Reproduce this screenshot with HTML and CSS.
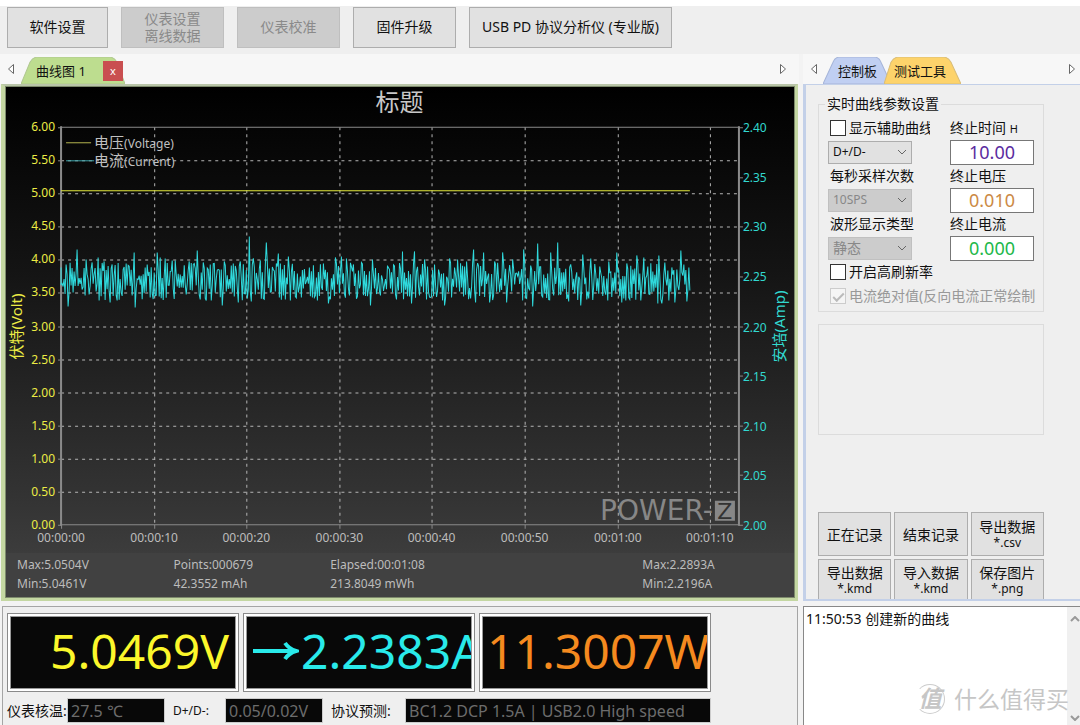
FILE: index.html
```html
<!DOCTYPE html>
<html lang="zh-CN">
<head>
<meta charset="utf-8">
<title>POWER-Z</title>
<link rel="stylesheet" href="styles.css">
</head>
<body>
<header class="toolbar">
  <button class="tool-btn first">软件设置</button>
  <button class="tool-btn" disabled>仪表设置<br>离线数据</button>
  <button class="tool-btn" disabled>仪表校准</button>
  <button class="tool-btn">固件升级</button>
  <button class="tool-btn wide">USB PD 协议分析仪 (专业版)</button>
</header>
<main class="workspace">
  <section class="left">
    <nav class="tabs">
      <button class="arrow" aria-label="向左"><svg width="8" height="12" viewBox="0 0 8 12"><path d="M6.500 1.500V10.500L1.500 6Z"/></svg></button>
      <button class="tab green"><svg class="shape" viewBox="0 0 104 26" preserveAspectRatio="none"><path d="M0 26L9 5Q12 0 17 0H88Q93 0 96 5L104 26Z"/></svg><span>曲线图 1</span></button>
      <button class="close" aria-label="关闭">x</button>
      <button class="arrow end" aria-label="向右"><svg width="8" height="12" viewBox="0 0 8 12"><path d="M1.500 1.500V10.500L6.500 6Z"/></svg></button>
    </nav>
    <div class="chart-frame">
      <svg class="chart" id="chart" viewBox="6 87 789 466">
        <text class="title" x="400" y="112">标题</text>
        <g id="grid"></g>
        <rect class="frame" x="62" y="128" width="677" height="397"/>
        <path class="axis" d="M62 127V526M739 127V526"/>
        <path class="volt-line" d="M62 191.500H690"/>
        <polyline class="amp-line" id="amps"/>
        <path class="volt-key" d="M67 143.500H92"/>
        <path class="amp-key" d="M67 161.500H95"/>
        <text class="key" x="95" y="149">电压<tspan class="small">(Voltage)</tspan></text>
        <text class="key" x="95" y="167">电流<tspan class="small">(Current)</tspan></text>
        <text class="volt-name" transform="translate(23 327) rotate(-90)">伏特(Volt)</text>
        <text class="amp-name" transform="translate(785 327) rotate(-90)">安培(Amp)</text>
        <g class="brand"><text x="713" y="520" text-anchor="end">POWER-</text><rect x="715" y="501" width="20" height="20"/><text class="z" x="725" y="519" text-anchor="middle">Z</text></g>
      </svg>
      <div class="stats">
        <span>Max:5.0504V</span><span>Points:000679</span><span>Elapsed:00:01:08</span><span>Max:2.2893A</span>
        <span>Min:5.0461V</span><span>42.3552 mAh</span><span>213.8049 mWh</span><span>Min:2.2196A</span>
      </div>
    </div>
  </section>
  <aside class="right">
    <nav class="tabs">
      <button class="arrow" aria-label="向左"><svg width="8" height="12" viewBox="0 0 8 12"><path d="M6.500 1.500V10.500L1.500 6Z"/></svg></button>
      <button class="tab blue"><svg class="shape" viewBox="0 0 68 26" preserveAspectRatio="none"><path d="M0 26L10 5Q12 0 17 0H51Q56 0 58 5L68 26Z"/></svg><span>控制板</span></button>
      <button class="tab gold"><svg class="shape" viewBox="0 0 77 26" preserveAspectRatio="none"><path d="M0 26L7 5Q10 0 15 0H59Q64 0 67 5L77 26Z"/></svg><span>测试工具</span></button>
      <button class="arrow end" aria-label="向右"><svg width="8" height="12" viewBox="0 0 8 12"><path d="M1.500 1.500V10.500L6.500 6Z"/></svg></button>
    </nav>
    <div class="panel">
      <fieldset class="group">
        <legend>实时曲线参数设置</legend>
        <div class="params">
          <div class="column">
            <label class="check"><input type="checkbox"><span>显示辅助曲线</span></label>
            <select aria-label="辅助曲线"><option>D+/D-</option></select>
            <label class="caption" for="rate">每秒采样次数</label>
            <select id="rate" disabled><option>10SPS</option></select>
            <label class="caption" for="wave">波形显示类型</label>
            <select id="wave" class="cn" disabled><option>静态</option></select>
          </div>
          <div class="column stop">
            <label class="caption" for="t">终止时间 <small>H</small></label>
            <input class="num purple" id="t" value="10.00">
            <label class="caption" for="v">终止电压</label>
            <input class="num amber" id="v" value="0.010">
            <label class="caption" for="a">终止电流</label>
            <input class="num lime" id="a" value="0.000">
          </div>
        </div>
        <label class="check"><input type="checkbox"><span>开启高刷新率</span></label>
        <label class="check off"><input type="checkbox" checked disabled><span>电流绝对值(反向电流正常绘制</span></label>
      </fieldset>
      <div class="blank"></div>
      <div class="actions">
        <button>正在记录</button><button>结束记录</button><button>导出数据<small>*.csv</small></button>
        <button class="cut">导出数据<small>*.kmd</small></button><button class="cut">导入数据<small>*.kmd</small></button><button class="cut">保存图片<small>*.png</small></button>
      </div>
    </div>
  </aside>
  <section class="meters">
    <div class="displays">
      <div class="meter"><output class="yellow">5.0469V</output></div>
      <div class="meter"><output class="cyan"><svg width="46" height="20" viewBox="0 0 46 20"><path d="M0 10H42M32 2Q36 8 43 10Q36 12 32 18"/></svg>2.2383A</output></div>
      <div class="meter"><output class="orange">11.3007W</output></div>
    </div>
    <div class="status">
      <label for="temp">仪表核温:</label><input id="temp" value="27.5 ℃" readonly>
      <label class="latin" for="dp">D+/D-:</label><input id="dp" value="0.05/0.02V" readonly>
      <label class="proto" for="pr">协议预测:</label><input id="pr" class="long" value="BC1.2 DCP 1.5A | USB2.0 High speed" readonly>
    </div>
  </section>
  <section class="log">
    <textarea readonly aria-label="日志">11:50:53 创建新的曲线</textarea>
    <div class="scroll"><svg width="10" height="6" viewBox="0 0 10 6"><path d="M1 5L5 1L9 5"/></svg><svg width="10" height="6" viewBox="0 0 10 6"><path d="M1 1L5 5L9 1"/></svg></div>
    <div class="mark"><span class="seal">值</span><span>什么值得买</span></div>
  </section>
</main>
<script src="chart.js"></script>
</body>
</html>
```
FILE: chart.js
```js
const NS = 'http://www.w3.org/2000/svg';
const grid = document.getElementById('grid');

function add(name, attrs, text) {
  const el = document.createElementNS(NS, name);
  for (const key in attrs) el.setAttribute(key, attrs[key]);
  if (text) el.textContent = text;
  grid.appendChild(el);
}

// Voltage scale and horizontal grid
for (let i = 0; i <= 12; i++) {
  const y = Math.round(128 + i * 397 / 12);
  if (i > 0 && i < 12) add('path', { class: 'dash', d: `M62 ${y + 0.5}H739` });
  add('path', { class: 'tick', d: `M59 ${y + 0.5}H62` });
  add('text', { class: 'volt', x: 56, y: y + 4 }, (6 - i * 0.5).toFixed(2));
}
// Current scale
for (let i = 0; i <= 8; i++) {
  const y = Math.round(128 + i * 397 / 8);
  add('path', { class: 'tick', d: `M739 ${y + 0.5}H743` });
  add('text', { class: 'amp', x: 743, y: y + 5 }, (2.4 - i * 0.05).toFixed(2));
}
// Time scale and vertical grid
['00:00:00', '00:00:10', '00:00:20', '00:00:30', '00:00:40', '00:00:50', '00:01:00', '00:01:10'].forEach((label, i) => {
  const x = Math.round(62 + i * 92.6);
  if (i > 0) add('path', { class: 'dash', d: `M${x + 0.5} 128V525` });
  add('path', { class: 'tick', d: `M${x + 0.5} 525V529` });
  add('text', { class: 'time', x: x, y: 542 }, label);
});

// Current samples: the extremes, with ripple between them
const extremes = [67,265,69,307,75,272,78,250,83,290,87,260,99,258,100,301,105,262,111,303,113,265,118,301,124,270,127,264,135,253,136,308,148,265,153,294,158,253,161,258,166,259,173,261,176,261,187,295,190,262,198,251,204,263,207,301,215,264,223,306,225,262,239,303,241,262,248,299,250,237,252,302,254,259,261,261,264,299,267,243,277,264,279,254,286,300,289,257,296,297,302,298,307,282,315,298,324,264,329,304,336,258,342,257,347,259,350,296,354,265,358,297,362,263,371,306,373,260,380,292,390,270,403,252,412,304,415,252,420,296,425,260,431,298,445,306,450,259,458,260,467,262,474,250,476,303,484,253,490,303,495,262,503,253,507,303,513,260,524,250,526,298,533,307,538,244,545,294,551,253,554,296,558,243,563,292,569,302,571,265,581,306,583,255,587,300,591,259,605,292,609,262,617,253,622,303,627,264,630,300,637,256,641,301,644,258,650,295,658,304,659,256,662,304,665,263,675,303,681,251,684,265,687,302,689,268,690,291];
let seed = 77;
const rnd = () => (seed = (seed * 16807) % 2147483647) / 2147483647;
const points = ['62,268', '62,285'];
let last = 63, n = 0;
for (let i = 0; i < extremes.length; i += 2) {
  while (last < extremes[i]) {
    const spread = n % 2 ? -1 : 1;
    points.push(`${last},${(282 + spread * (2 + rnd() * 17)).toFixed(1)}`);
    last += 1;
    if (rnd() > 0.2) n++;
  }
  points.push(`${extremes[i]},${extremes[i + 1]}`);
  last = extremes[i] + 1;
}
document.getElementById('amps').setAttribute('points', points.join(' '));
```
FILE: styles.css
```css
* { box-sizing: border-box; }
body {
  margin: 0;
  min-height: 100vh;
  display: flex;
  flex-direction: column;
  padding-top: 6px;
  background: #fff;
  color: #111;
  font: 14px/18px "Noto Sans", "Noto Sans CJK SC", sans-serif;
}
button, input, select, textarea { font: inherit; color: inherit; margin: 0; }
button { padding: 0; }

.toolbar { display: flex; gap: 13px; height: 48px; padding: 1px 7px 6px; background: #efefef; }
.tool-btn { width: 103px; border: 1px solid #adadad; background: #e1e1e1; line-height: 17px; padding-bottom: 2px; }
.tool-btn.first { width: 101px; }
.tool-btn.wide { width: 203px; white-space: nowrap; }
.tool-btn:disabled { background: #ccc; border-color: #bfbfbf; color: #8a8a8a; }

.workspace {
  flex: 1;
  display: grid;
  grid-template-columns: minmax(0, 1fr) 277px;
  grid-template-rows: 1fr auto;
  column-gap: 4px;
  row-gap: 5px;
  background: #f3f3f3;
}
.left, .right { display: flex; flex-direction: column; min-width: 0; }
.tabs { display: flex; align-items: center; height: 30px; background: #f7f7f7; }
.arrow { width: 8px; height: 12px; border: 0; background: none; margin-left: 7px; display: flex; }
.arrow path { fill: #fff; stroke: #666; }
.arrow.end { margin-left: auto; margin-right: 12px; }
.right .arrow.end { margin-right: 4px; }
.tab { position: relative; align-self: flex-end; height: 27px; border: 0; background: none; font-size: 13px; white-space: nowrap; text-align: left; }
.tab span { position: relative; }
.shape { position: absolute; inset: 0; width: 100%; height: 100%; }
.green { width: 104px; margin-left: 6px; padding-left: 15px; }
.green path { fill: #bddd8f; stroke: #b0c890; }
.blue { width: 68px; margin-left: 5px; padding-left: 15px; z-index: 1; }
.blue path { fill: #c0cff2; stroke: #a5b4d8; }
.gold { width: 77px; margin-left: -7px; padding-left: 10px; z-index: 2; }
.gold path { fill: #fdd36b; stroke: #d9bd78; }
.close { width: 20px; height: 20px; margin-left: -22px; align-self: flex-end; margin-bottom: 3px; border: 0; background: #c94f50; color: #fff; z-index: 1; font-size: 11px; line-height: 16px; }

.chart-frame { flex: 1; display: flex; flex-direction: column; margin: 0 1px; border: 3px solid #c4d7a2; border-top: 2px solid #b9c5a8; border-left-width: 4px; background: linear-gradient(#000, #141414 36%, #333 80%, #3c3c3c 91%, #424242); box-shadow: inset 0 0 0 1px #7d8a6c; }
.chart { flex: 1; width: 100%; min-height: 0; font-size: 12px; }
.title { fill: #c8c8c8; font-size: 24px; text-anchor: middle; }
.frame { fill: none; stroke: #8a8a8a; }
.axis { fill: none; stroke: #8a8a8a; stroke-width: 2; }
.tick { stroke: #8a8a8a; }
.dash { stroke: #b5b5b5; stroke-dasharray: 3 4; }
.volt, .volt-name { fill: #ecec45; }
.volt { text-anchor: end; }
.amp, .amp-name { fill: #32d8cf; }
.volt-name, .amp-name { font-size: 15px; text-anchor: middle; }
.time { fill: #bdbdbd; text-anchor: middle; }
.volt-line { stroke: #e3e93c; }
.amp-line { fill: none; stroke: #2fd9dc; }
.volt-key { stroke: #b6b650; }
.amp-key { stroke: #3ea5ab; }
.key { fill: #c0c0c0; font-size: 15px; }
.small { font-size: 12px; }
.brand text { fill: #878787; font: 400 28px "DejaVu Sans", sans-serif; }
.brand rect { fill: #878787; }
.brand .z { fill: #333; font-size: 22px; }
.stats { display: grid; grid-template-columns: 157fr 157fr 313fr 140fr; padding: 2px 12px 4px 11px; font-size: 12px; line-height: 19px; color: #bcbcbc; background: #414141; margin: 0 1px 1px; }

.panel { flex: 1; display: flex; flex-direction: column; padding: 9px 36px 0 12px; border: solid #c3d0e8; border-width: 1px 0 2px 3px; background: #efefef; }
.group { margin: 0; padding: 2px 5px 3px 9px; border: 1px solid #dcdcdc; min-width: 0; }
.group legend { padding: 0 2px; margin-left: -3px; line-height: 20px; }
.params { display: flex; justify-content: space-between; }
.column { display: grid; grid-template-rows: repeat(6, 24px); align-items: center; width: 102px; }
.stop { width: 84px; margin-right: 4px; }
.caption, .check { white-space: nowrap; }
.caption small { font-size: 11px; }
.check { display: flex; align-items: center; gap: 3px; height: 24px; overflow: hidden; padding-left: 2px; }
.check span { overflow: hidden; }
.check input { appearance: none; flex: none; width: 16px; height: 16px; border: 1px solid #333; background: #fff; }
.off { color: #999; }
.off input { border-color: #ccc; background: #f5f5f5; display: grid; place-items: center; }
.off input::before { content: ""; width: 9px; height: 4px; border: solid #bbb; border-width: 0 0 2px 2px; rotate: -45deg; }
.column .caption { padding-left: 2px; }
.stop .caption { padding: 0; }
select { appearance: none; width: 84px; height: 23px; padding: 0 4px; border: 1px solid #adadad; border-radius: 0; font-size: 12px !important; opacity: 1;
  background: #e1e1e1 url("data:image/svg+xml,%3Csvg xmlns='http://www.w3.org/2000/svg' width='10' height='6'%3E%3Cpath d='M1 1l4 4 4-4' fill='none' stroke='%23666'/%3E%3C/svg%3E") no-repeat right 4px center; }
select:disabled { background-color: #ccc; border-color: #c0c0c0; color: #888; opacity: 1; }
select.cn { font-size: 14px !important; }
.num { width: 84px; height: 25px; padding: 0; border: 1px solid #777; background: #fff; text-align: center; font-size: 18px; }
.purple { color: #5b2ba0; }
.amber { color: #cc8a45; }
.lime { color: #22b84a; }
.blank { height: 111px; margin-top: 12px; border: 1px solid #dcdcdc; }
.actions { margin-top: auto; display: grid; grid-template-columns: repeat(3, 1fr); grid-template-rows: 44px 40px; gap: 3px; }
.actions button { border: 1px solid #adadad; background: #e1e1e1; line-height: 17px; }
.actions .cut { border-bottom: 0; }
.actions small { display: block; font-size: 12px; line-height: 15px; }

.meters { margin: 0 1px 0 2px; padding: 6px 4px 2px; border: solid #a5a5a5; border-width: 1px 1px 0; background: #efefef; min-width: 0; }
.displays { display: flex; gap: 4px; }
.meter { width: 232px; height: 79px; padding: 2px; border: 1px solid #8a8a8a; background: #fff; }
.meter output { display: flex; align-items: center; height: 100%; border: 1px solid #999; background: #080808; padding: 0 4px 4px; font-size: 48px; line-height: 66px; white-space: nowrap; overflow: hidden; }
.meter .yellow { justify-content: flex-end; padding-right: 6px; color: #fbf72b; }
.meter .cyan { color: #29eaea; }
.cyan svg { flex: none; margin: 0 2px 0 2px; }
.cyan path { fill: none; stroke: #29eaea; stroke-width: 4; }
.meter .orange { color: #f58a1f; }
.status { display: flex; align-items: center; margin-top: 6px; }
.status input { width: 98px; height: 25px; padding: 0 3px; border: 1px solid #ccc; background: #080808; color: #6c6c6c; font-size: 16px; }
.status label { width: 60px; white-space: nowrap; }
.status .latin { width: 60px; padding-left: 8px; font-size: 12px; }
.status .proto { width: 82px; padding-left: 8px; }
.status .long { width: 306px; }

.log { position: relative; display: flex; border: solid #888; border-width: 1px 0 0 1px; background: #fff; min-width: 0; }
.log textarea { flex: 1; min-width: 0; border: 0; padding: 3px 2px; resize: none; outline: 0; background: #fff; overflow: hidden; }
.scroll { width: 13px; display: flex; flex-direction: column; justify-content: space-between; align-items: flex-end; padding: 9px 0 4px; background: #f0f0f0; overflow: hidden; }
.scroll path { fill: none; stroke: #999; stroke-width: 2; }
.mark { position: absolute; right: 11px; bottom: 11px; display: flex; align-items: center; gap: 9px; color: #c6c6c6; font-size: 23px; line-height: 30px; }
.seal { width: 30px; height: 30px; border: 1px solid #ccc; border-left-color: transparent; border-radius: 50%; text-align: center; font-weight: 700; line-height: 27px; font-style: italic; }
```
